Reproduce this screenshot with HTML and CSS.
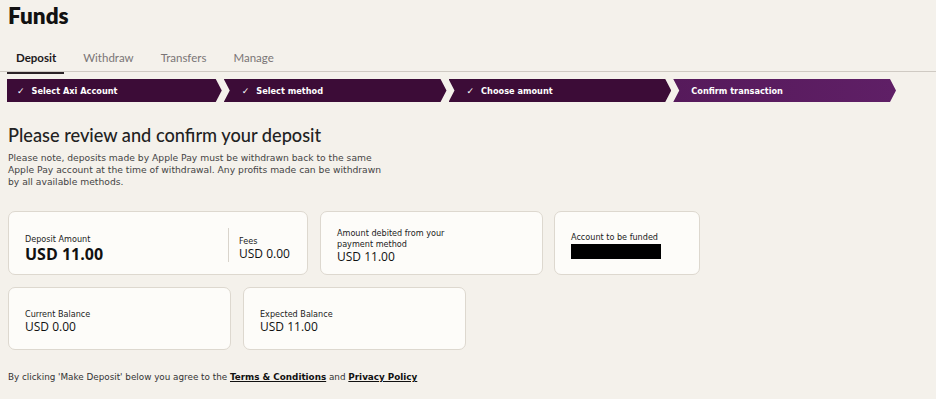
FILE: index.html
```html
<!DOCTYPE html>
<html>
<head>
<meta charset="utf-8">
<link rel="stylesheet" href="styles.css">
</head>
<body>
<h1 class="title">Funds</h1>
<nav class="tabs">
  <span class="tab active">Deposit</span>
  <span class="tab">Withdraw</span>
  <span class="tab">Transfers</span>
  <span class="tab">Manage</span>
</nav>
<div class="steps">
  <div class="step first"><span class="check">✓</span>Select Axi Account</div>
  <div class="step"><span class="check">✓</span>Select method</div>
  <div class="step"><span class="check">✓</span>Choose amount</div>
  <div class="step current">Confirm transaction</div>
</div>
<main class="content">
  <h2 class="heading">Please review and confirm your deposit</h2>
  <p class="note">Please note, deposits made by Apple Pay must be withdrawn back to the same Apple Pay account at the time of withdrawal. Any profits made can be withdrawn by all available methods.</p>
  <div class="row first-row">
    <div class="card card-deposit">
      <div class="cell main">
        <div class="label">Deposit Amount</div>
        <div class="value big">USD 11.00</div>
      </div>
      <div class="vsep"></div>
      <div class="cell">
        <div class="label">Fees</div>
        <div class="value">USD 0.00</div>
      </div>
    </div>
    <div class="card card-debit">
      <div class="cell">
        <div class="label">Amount debited from your<br>payment method</div>
        <div class="value">USD 11.00</div>
      </div>
    </div>
    <div class="card card-account">
      <div class="cell">
        <div class="label">Account to be funded</div>
        <div class="redact"></div>
      </div>
    </div>
  </div>
  <div class="row">
    <div class="card card-bal">
      <div class="cell">
        <div class="label">Current Balance</div>
        <div class="value">USD 0.00</div>
      </div>
    </div>
    <div class="card card-bal">
      <div class="cell">
        <div class="label">Expected Balance</div>
        <div class="value">USD 11.00</div>
      </div>
    </div>
  </div>
  <p class="terms">By clicking 'Make Deposit' below you agree to the <a>Terms &amp; Conditions</a> and <a>Privacy Policy</a></p>
</main>
</body>
</html>
```
FILE: styles.css
```css
html, body {
  margin: 0;
  padding: 0;
  background: #f4f1eb;
  font-family: Lato, "Noto Sans", sans-serif;
  color: #1f1a1d;
}
.title {
  margin: 0;
  padding: 3px 0 0 8px;
  font-size: 22.5px;
  font-weight: 800;
  line-height: 26px;
  color: #111;
}
.tabs {
  display: flex;
  gap: 27px;
  margin-top: 20px;
  padding-left: 16px;
  border-bottom: 1px solid #cfcac3;
  height: 22px;
}
.tab {
  font-size: 11.5px;
  color: #7a7576;
  line-height: 18px;
  position: relative;
}
.tab.active {
  color: #1d1a1b;
  font-weight: 700;
}
.tab.active::after {
  content: "";
  position: absolute;
  left: -9px;
  right: -8px;
  bottom: -3px;
  height: 2px;
  background: #2a2226;
}
.steps {
  display: flex;
  gap: 2px;
  width: 889px;
  margin: 7px 0 0 7px;
  height: 23px;
}
.step {
  flex: 1;
  background: #3c0c37;
  color: #fff;
  font-family: "DejaVu Sans", sans-serif;
  font-size: 8.2px;
  font-weight: 700;
  display: flex;
  align-items: center;
  padding-left: 18px;
  clip-path: polygon(0 0, calc(100% - 6px) 0, 100% 50%, calc(100% - 6px) 100%, 0 100%, 6px 50%);
}
.step.first {
  padding-left: 10px;
  clip-path: polygon(0 0, calc(100% - 6px) 0, 100% 50%, calc(100% - 6px) 100%, 0 100%);
}
.step.current {
  background: linear-gradient(90deg, #561a5b, #5f1f66);
}
.check {
  font-size: 9px;
  margin-right: 7px;
}
.content {
  padding: 0 8px;
}
.heading {
  margin: 21px 0 0;
  font-size: 18.2px;
  font-weight: 500;
  line-height: 24px;
  color: #222;
}
.note {
  margin: 5px 0 0;
  width: 380px;
  font-family: "DejaVu Sans", sans-serif;
  font-size: 9.2px;
  line-height: 12px;
  color: #444;
}
.row {
  display: flex;
  gap: 12px;
  margin-top: 12px;
}
.row.first-row {
  margin-top: 23px;
}
.card {
  box-sizing: border-box;
  height: 64px;
  background: #fdfcf9;
  border: 1px solid #ddd8cf;
  border-radius: 7px;
  display: flex;
  align-items: center;
  padding: 5px 0 0 16px;
}
.card-deposit { width: 300px; padding-top: 11px; }
.card-debit { width: 223px; }
.card-account { width: 146px; margin-left: -1px; }
.card-bal { width: 223px; height: 63px; }
.cell.main { width: 203px; }
.vsep {
  width: 1px;
  height: 34px;
  background: #d9d4cc;
  margin: -7px 10px 0 0;
}
.label {
  font-family: "DejaVu Sans", sans-serif;
  font-size: 8.1px;
  line-height: 11px;
  color: #222;
}
.value {
  font-family: "Open Sans", sans-serif;
  font-size: 12px;
  line-height: 14px;
  color: #111;
}
.value.big {
  font-size: 16px;
  font-weight: 700;
  line-height: 18px;
}
.redact {
  width: 90px;
  height: 15px;
  background: #000;
  margin-top: 1px;
}
.terms {
  margin: 22px 0 0;
  font-family: "DejaVu Sans", sans-serif;
  font-size: 8.8px;
  color: #333;
}
.terms a {
  font-weight: 700;
  color: #111;
  text-decoration: underline;
}
```
